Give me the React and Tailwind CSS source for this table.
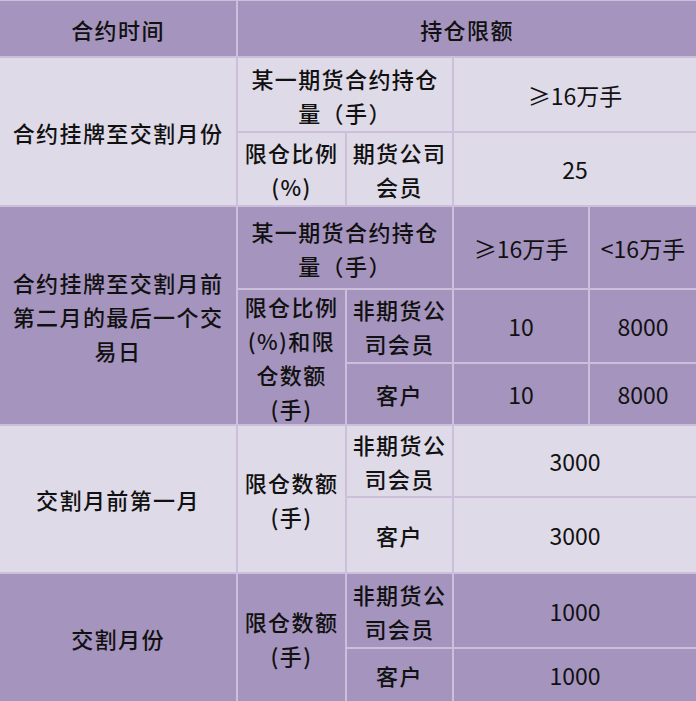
import React from "react";

const DARK = "bg-[#a594be]";
const LIGHT = "bg-[#dfdae8]";

function Cell({ bg, className = "", lines, num = false }) {
  return (
    <div
      className={`${bg} flex flex-col items-center justify-center text-center text-[#111] ${
        num ? "text-[23px] font-normal" : "text-[22px] font-medium tracking-[1.4px]"
      } leading-[34px] ${className}`}
    >
      {lines.map((l, i) => (
        <div key={i} className="whitespace-nowrap">
          {l}
        </div>
      ))}
    </div>
  );
}

export default function App() {
  return (
    <div
      className="w-[696px] h-[701px] bg-[#cbbfdb] grid gap-[2px] pt-[1px] overflow-hidden"
      style={{
        fontFamily: '"Noto Sans CJK SC", "Noto Sans", sans-serif',
      }}
    >
      <div className="grid h-full grid-cols-[236px_107px_105px_134px_106px] grid-rows-[55px_73px_72px_81px_72px_60px_70px_74px_73px_52px] gap-[2px]">
        {/* Header */}
        <Cell bg={DARK} lines={["合约时间"]} />
        <Cell bg={DARK} className="col-span-4" lines={["持仓限额"]} />

        {/* Section A */}
        <Cell bg={LIGHT} className="row-span-2" lines={["合约挂牌至交割月份"]} />
        <Cell bg={LIGHT} className="col-span-2" lines={["某一期货合约持仓", "量（手）"]} />
        <Cell bg={LIGHT} num className="col-span-2" lines={["≥16万手"]} />
        <Cell bg={LIGHT} lines={["限仓比例", "(%)"]} />
        <Cell bg={LIGHT} lines={["期货公司", "会员"]} />
        <Cell bg={LIGHT} num className="col-span-2" lines={["25"]} />

        {/* Section B */}
        <Cell
          bg={DARK}
          className="row-span-3"
          lines={["合约挂牌至交割月前", "第二月的最后一个交", "易日"]}
        />
        <Cell bg={DARK} className="col-span-2" lines={["某一期货合约持仓", "量（手）"]} />
        <Cell bg={DARK} num lines={["≥16万手"]} />
        <Cell bg={DARK} num lines={["<16万手"]} />
        <Cell bg={DARK} className="row-span-2" lines={["限仓比例", "(%)和限", "仓数额", "(手)"]} />
        <Cell bg={DARK} lines={["非期货公", "司会员"]} />
        <Cell bg={DARK} num lines={["10"]} />
        <Cell bg={DARK} num lines={["8000"]} />
        <Cell bg={DARK} lines={["客户"]} />
        <Cell bg={DARK} num lines={["10"]} />
        <Cell bg={DARK} num lines={["8000"]} />

        {/* Section C */}
        <Cell bg={LIGHT} className="row-span-2" lines={["交割月前第一月"]} />
        <Cell bg={LIGHT} className="row-span-2" lines={["限仓数额", "(手)"]} />
        <Cell bg={LIGHT} lines={["非期货公", "司会员"]} />
        <Cell bg={LIGHT} num className="col-span-2" lines={["3000"]} />
        <Cell bg={LIGHT} lines={["客户"]} />
        <Cell bg={LIGHT} num className="col-span-2" lines={["3000"]} />

        {/* Section D */}
        <Cell bg={DARK} className="row-span-2" lines={["交割月份"]} />
        <Cell bg={DARK} className="row-span-2" lines={["限仓数额", "(手)"]} />
        <Cell bg={DARK} lines={["非期货公", "司会员"]} />
        <Cell bg={DARK} num className="col-span-2" lines={["1000"]} />
        <Cell bg={DARK} lines={["客户"]} />
        <Cell bg={DARK} num className="col-span-2" lines={["1000"]} />
      </div>
    </div>
  );
}
